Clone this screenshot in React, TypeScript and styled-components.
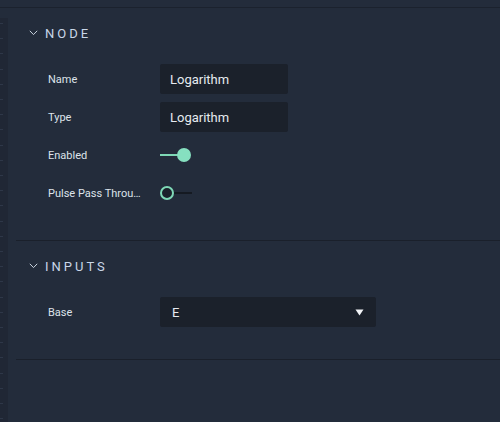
import React from "react";
import styled, { createGlobalStyle } from "styled-components";

const Global = createGlobalStyle`
  html, body { margin: 0; padding: 0; background: #232c3b; }
  body { font-family: Roboto, "Noto Sans", "Liberation Sans", sans-serif; }
  * { box-sizing: border-box; }
`;

const Page = styled.div`
  width: 500px;
  height: 422px;
  background: #232c3b;
  display: flex;
  flex-direction: column;
  overflow: hidden;
`;

const TopBar = styled.div`
  height: 8px;
  flex: none;
  border-bottom: 1px solid #1b222e;
  margin-bottom: -1px;
`;

const Body = styled.div`
  flex: 1;
  display: flex;
`;

const Ruler = styled.div`
  width: 8px;
  margin-top: 11px;
  flex: none;
  background-color: #202735;
  background-image: repeating-linear-gradient(
    to bottom,
    transparent 0px,
    transparent 5px,
    #2e3748 5px,
    #2e3748 6px,
    transparent 6px,
    transparent 15.2px
  );
  background-size: 3px 100%;
  background-repeat: no-repeat;
`;

const Main = styled.div`
  flex: 1;
  display: flex;
  flex-direction: column;
  padding-left: 8px;
`;

const Section = styled.section`
  padding: 14px 0 32px 0;
  border-bottom: 1px solid #1a202b;
  &:first-child {
    padding-top: 15px;
  }
`;

const Header = styled.div`
  height: 22px;
  display: flex;
  align-items: center;
  padding-left: 13px;
  gap: 7px;
  margin-bottom: 20px;
`;

const Title = styled.span`
  font-size: 13px;
  letter-spacing: 3px;
  color: #c9d7e8;
  font-weight: 400;
`;

const Rows = styled.div`
  display: flex;
  flex-direction: column;
  gap: 8px;
`;

const Row = styled.div`
  height: 30px;
  display: flex;
  align-items: center;
`;

const Label = styled.div`
  width: 144px;
  padding: 0 15px 0 32px;
  font-size: 11px;
  color: #dde3ea;
  white-space: nowrap;
  overflow: hidden;
  text-overflow: ellipsis;
`;

const Field = styled.div<{ $w: number }>`
  width: ${(p) => p.$w}px;
  height: 30px;
  background: #1b212b;
  border-radius: 2px;
  display: flex;
  align-items: center;
  justify-content: space-between;
  padding: 0 12px 0 10px;
  font-size: 13px;
  color: #e6ebf0;
`;

const SelectField = styled(Field)`
  padding-left: 12px;
`;

const Toggle = styled.div<{ $on: boolean }>`
  width: 32px;
  height: 14px;
  position: relative;
  display: flex;
  align-items: center;
  &::before {
    content: "";
    position: absolute;
    left: ${(p) => (p.$on ? "0" : "14px")};
    right: ${(p) => (p.$on ? "14px" : "0")};
    height: 2px;
    top: 6px;
    background: ${(p) => (p.$on ? "#7ed8b6" : "#151a22")};
  }
`;

const Knob = styled.div<{ $on: boolean }>`
  position: absolute;
  top: 0;
  left: ${(p) => (p.$on ? "17px" : "0")};
  width: 14px;
  height: 14px;
  border-radius: 50%;
  background: ${(p) => (p.$on ? "#86e0c0" : "#1b212b")};
  border: ${(p) => (p.$on ? "none" : "2px solid #7ed8b6")};
`;

const Chevron = () => (
  <svg width="9" height="6" viewBox="0 0 9 6" fill="none">
    <path d="M0.8 0.8 L4.5 4.6 L8.2 0.8" stroke="#c9d3de" strokeWidth="1" />
  </svg>
);

const Caret = () => (
  <svg width="9" height="7" viewBox="0 0 9 7">
    <path d="M0.5 0.5 H8.5 L4.5 6.5 Z" fill="#f2f4f7" />
  </svg>
);

export default function App() {
  return (
    <Page>
      <Global />
      <TopBar />
      <Body>
        <Ruler />
        <Main>
          <Section>
            <Header>
              <Chevron />
              <Title>NODE</Title>
            </Header>
            <Rows>
              <Row>
                <Label>Name</Label>
                <Field $w={128}>Logarithm</Field>
              </Row>
              <Row>
                <Label>Type</Label>
                <Field $w={128}>Logarithm</Field>
              </Row>
              <Row>
                <Label>Enabled</Label>
                <Toggle $on={true}>
                  <Knob $on={true} />
                </Toggle>
              </Row>
              <Row>
                <Label>Pulse Pass Through</Label>
                <Toggle $on={false}>
                  <Knob $on={false} />
                </Toggle>
              </Row>
            </Rows>
          </Section>
          <Section>
            <Header>
              <Chevron />
              <Title>INPUTS</Title>
            </Header>
            <Rows>
              <Row>
                <Label>Base</Label>
                <SelectField $w={216}>
                  <span>E</span>
                  <Caret />
                </SelectField>
              </Row>
            </Rows>
          </Section>
        </Main>
      </Body>
    </Page>
  );
}
